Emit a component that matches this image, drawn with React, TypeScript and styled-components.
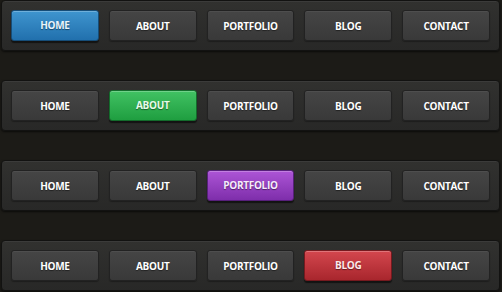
import React from "react";
import styled, { createGlobalStyle } from "styled-components";

const GlobalStyle = createGlobalStyle`
  html, body {
    margin: 0;
    padding: 0;
    background: #1c1b17;
  }
  body {
    font-family: "Open Sans", "DejaVu Sans", sans-serif;
  }
`;

type Tone = "blue" | "green" | "purple" | "red";

const tones: Record<Tone, { top: string; bottom: string; border: string; text: string }> = {
  blue: { top: "#3f95cf", bottom: "#2170ad", border: "#164d78", text: "#e8f4fc" },
  green: { top: "#41c263", bottom: "#1f9e40", border: "#136b2b", text: "#e8fbe9" },
  purple: { top: "#ad55d6", bottom: "#7e2eab", border: "#57207a", text: "#f6ebfc" },
  red: { top: "#d4474e", bottom: "#a8262d", border: "#761a1f", text: "#fde9ea" },
};

const Page = styled.div`
  display: flex;
  flex-direction: column;
  gap: 29px;
  width: 502px;
  height: 292px;
  padding-left: 1px;
  box-sizing: border-box;
`;

const Bar = styled.nav`
  display: flex;
  gap: 10px;
  width: 499px;
  height: 51px;
  box-sizing: border-box;
  padding: 9px 9px;
  background: linear-gradient(#31312f, #282827);
  border: 1px solid #121211;
  border-radius: 4px;
  box-shadow: inset 0 1px 0 #3b3b3a, 0 1px 2px rgba(0, 0, 0, 0.6);
`;

const Button = styled.a<{ $tone?: Tone }>`
  display: flex;
  align-items: center;
  justify-content: center;
  width: 88px;
  height: 31px;
  box-sizing: border-box;
  border-radius: 3px;
  font-size: 10px;
  font-weight: 700;
  letter-spacing: -0.3px;
  text-transform: uppercase;
  text-decoration: none;
  color: ${(p) => (p.$tone ? tones[p.$tone].text : "#ffffff")};
  background: ${(p) =>
    p.$tone
      ? `linear-gradient(${tones[p.$tone].top}, ${tones[p.$tone].bottom})`
      : "linear-gradient(#454545, #393939)"};
  border: 1px solid ${(p) => (p.$tone ? tones[p.$tone].border : "#222222")};
  box-shadow: ${(p) =>
    p.$tone
      ? "inset 0 1px 0 rgba(255,255,255,0.25), 0 2px 1px rgba(0,0,0,0.55)"
      : "inset 0 1px 0 #4e4e4e, 0 1px 1px rgba(0,0,0,0.3)"};
  padding-bottom: ${(p) => (p.$tone ? "2px" : "0")};
  text-shadow: 0 1px 1px rgba(0, 0, 0, 0.45);
`;

const items = ["Home", "About", "Portfolio", "Blog", "Contact"];

const menus: { active: number; tone: Tone }[] = [
  { active: 0, tone: "blue" },
  { active: 1, tone: "green" },
  { active: 2, tone: "purple" },
  { active: 3, tone: "red" },
];

const App = () => {
  return (
    <>
      <GlobalStyle />
      <Page>
        {menus.map((m, i) => (
          <Bar key={i}>
            {items.map((label, j) => (
              <Button key={label} href="#" $tone={j === m.active ? m.tone : undefined}>
                {label}
              </Button>
            ))}
          </Bar>
        ))}
      </Page>
    </>
  );
};

export default App;
